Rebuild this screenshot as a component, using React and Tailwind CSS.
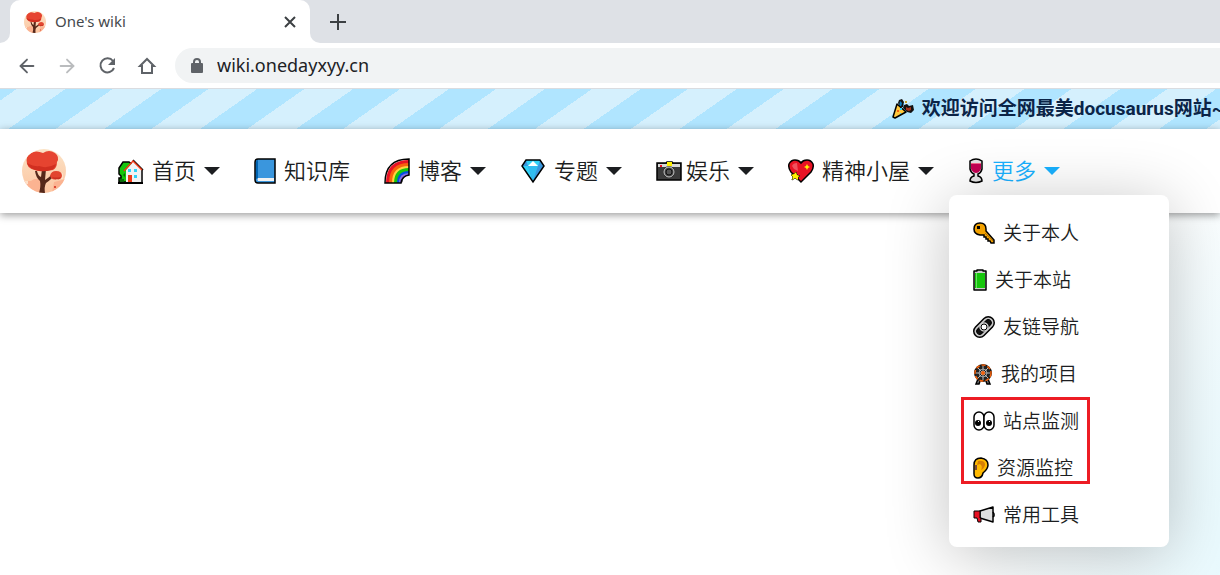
import React from 'react';
import { ArrowLeft, ArrowRight } from 'lucide-react';

const TreeLogo = ({ className }) => (
  <svg viewBox="0 0 44 44" className={className} aria-hidden="true">
    <defs>
      <clipPath id="tree-clip">
        <circle cx="22" cy="22" r="22" />
      </clipPath>
      <linearGradient id="tree-sky" x1="0" y1="0" x2="0" y2="1">
        <stop offset="0" stopColor="#fbe3c6" />
        <stop offset="1" stopColor="#fcc4a0" />
      </linearGradient>
    </defs>
    <g clipPath="url(#tree-clip)">
      <rect width="44" height="44" fill="url(#tree-sky)" />
      <path d="M0 32h9l3-2h7v14H0zM32 33l12-3v14H30z" fill="#fbb391" />
      <path d="M1 32h5v3H1zM33 24h8v6h-8z" fill="#fde0c8" />
      <path d="M17 44q2-7 1-12-4-3-5-10h2q1 5 4 6l1-8h4l-1 11q5-3 7-6l2 1q-2 4-8 8-2 4-1 10z" fill="#55281a" />
      <path d="M5 15q-2-8 4-11 5-3 12 0 6-4 12 0 5 4 2 9 0 6-4 8-6 1-11 1-13 0-15-7z" fill="#e64430" />
      <path d="M5 14q8 4 12 3 8 3 17-2-1 5-5 6-6 2-12 1-10-2-12-8z" fill="#d12f20" />
      <path d="M28 27q1-5 6-5 6 0 6 5-1 4-5 3-5 2-7-3z" fill="#e2452f" />
      <path d="M30 28q4 1 9 0-1 3-4 2-3 1-5-2z" fill="#c93020" />
      <path d="M32 37h2v2h-2z" fill="#dc4a35" />
    </g>
  </svg>
);

const House = () => (
  <svg viewBox="0 0 26 26" className="h-[26px] w-[26px]" aria-hidden="true">
    <path d="M1 24v-4h2v-2l-2-2v-6l4-6h6l4 3v17z" fill="#16c60c" stroke="#000" strokeWidth="1.5" />
    <path d="M2 21h4v3H2zM5 17l2 2v-4z" fill="#0b6a0b" />
    <path d="M8 24V12l7-8 8 8v12z" fill="#f2f2f2" />
    <path d="M24 24V12" stroke="#000" strokeWidth="1.5" />
    <path d="M15 2l10 10" fill="none" stroke="#000" strokeWidth="1.5" />
    <path d="M6 13l9-10 9 9" fill="none" stroke="#f03a17" strokeWidth="1.5" />
    <path d="M10 11h3v3h-3zM16 11h3v3h-3zM16 17h3v3h-3z" fill="#31d2f7" />
    <path d="M10 17h4v7h-4z" fill="#f03a17" />
    <path d="M0 25h25" stroke="#000" strokeWidth="2" />
  </svg>
);

const Book = () => (
  <svg viewBox="0 0 22 26" className="h-[26px] w-[22px]" aria-hidden="true">
    <path d="M1 4q0-3 3-3h17v24H4q-3 0-3-3z" fill="#3a96dd" stroke="#000" strokeWidth="1.5" />
    <path d="M2 4q0-2 2-2v18l-2 1z" fill="#0063b1" />
    <path d="M4 20h16v3H4q-1-1 0-3z" fill="#f2f2f2" />
  </svg>
);

const Rainbow = () => (
  <svg viewBox="0 0 26 26" className="h-[26px] w-[26px]" aria-hidden="true">
    <path d="M2 25Q2 2 25 2v15q-7 1-7 8z" fill="#e81224" />
    <path d="M5 25Q5 5 25 5v12q-7 1-7 8z" fill="#f7630c" />
    <path d="M8 25Q8 8 25 8v9q-7 1-7 8z" fill="#ffd23e" />
    <path d="M10 25q0-15 15-15v7q-7 1-7 8z" fill="#16c60c" />
    <path d="M13 25q0-12 12-12v4q-7 1-7 8z" fill="#0050e0" />
    <path d="M15 25q0-10 10-10v2q-7 1-7 8z" fill="#886ce4" />
    <path d="M1 25Q1 1 25 1v16q-7 1-8 8z" fill="none" stroke="#000" strokeWidth="1.5" />
  </svg>
);

const Diamond = () => (
  <svg viewBox="0 0 26 26" className="h-[26px] w-[26px]" aria-hidden="true">
    <path d="M6 2h14l4 6-11 16L2 8z" fill="#3a96dd" />
    <path d="M6 2h14l-2 6H8z" fill="#31d2f7" />
    <path d="M2 8h6l5 16z" fill="#31d2f7" />
    <path d="M8 8h10l-5 15z" fill="#31bdf0" />
    <path d="M8 8l5-5 5 5z" fill="#fff" />
    <path d="M6 2h14l4 6-11 16L2 8z" fill="none" stroke="#000" strokeWidth="1.5" />
  </svg>
);

const Camera = () => (
  <svg viewBox="0 0 26 26" className="h-[26px] w-[26px]" aria-hidden="true">
    <path d="M1 5h9l1-1h5l1 1h8v17H1z" fill="#3b3b3b" stroke="#000" strokeWidth="1.5" />
    <path d="M2 6h22v3H2z" fill="#d9d9d9" />
    <path d="M4 7h2v2H4z" fill="#e81224" />
    <path d="M11 4h5v4h-5z" fill="#fff100" />
    <circle cx="13" cy="14" r="6" fill="#2a2a2a" />
    <circle cx="13" cy="14" r="5" fill="#444" stroke="#ccc" />
    <circle cx="13" cy="14" r="3" fill="#555" stroke="#111" />
  </svg>
);

const Heart = () => (
  <svg viewBox="0 0 26 26" className="h-[26px] w-[26px]" aria-hidden="true">
    <path d="M13 24L3 14Q0 10 1 6q2-4 6-4 4 0 6 3 2-3 6-3 4 0 6 4 1 4-2 8z" fill="#e81224" stroke="#000" strokeWidth="1.5" />
    <path d="M4 8q1-3 5-3l1 8-4-2z" fill="#f46c76" opacity=".7" />
    <path d="M19 6l1 2 2 1-2 1-1 2-1-2-2-1 2-1z" fill="#fff100" />
    <path d="M8 14l1 3 3 1-2 1v3l-3-2-3 2 1-3-2-2 3-1z" fill="#fff100" stroke="#000" strokeWidth="1" paintOrder="stroke" />
  </svg>
);

const Wine = () => (
  <svg viewBox="0 0 16 26" className="h-[26px] w-4" aria-hidden="true">
    <path d="M2 3q6-4 12 0v8q-1 4-4 5v2q4 1 4 5-6 3-12 0 0-4 4-5v-2q-3-1-4-5z" fill="#e4e4e4" stroke="#000" strokeWidth="1.5" />
    <path d="M3 5h10v6q-2 4-5 4t-5-4z" fill="#c30052" />
    <path d="M3 5h10v1H3z" fill="#f3648a" />
  </svg>
);

const Popper = () => (
  <svg viewBox="0 0 22 22" className="h-[22px] w-[22px]" aria-hidden="true">
    <path d="M6 5l1-3 3-1 2 3-1 5H8zM11 10l1-3 3-1 2 2 4-1 1 5-3 3-4-1z" fill="#111" />
    <path d="M8 3l2 2-1 4H7zM11 5l1 1-1 2z" fill="#0b7fc4" />
    <path d="M14 9l2 1 3-1v3l-2 1-3-1z" fill="#a8321c" />
    <path d="M13 3h2v2h-2z" fill="#c8a22a" />
    <path d="M5 6l9 8-11 6-2-1z" fill="#ffc83d" stroke="#000" strokeWidth="1.5" strokeLinejoin="round" />
    <path d="M8 10h2v2H8zM8 15h1v1H8z" fill="#31d2f7" />
    <path d="M5 12h2v2H5z" fill="#f7630c" />
  </svg>
);

const Key = () => (
  <svg viewBox="0 0 22 22" className="h-[22px] w-[22px]" aria-hidden="true">
    <path d="M7 1q6 0 6 6v2l8 9v3h-3l-1-2h-2v-2h-2v-2h-2v-2H7Q1 12 1 7q0-6 6-6z" fill="#f2a100" stroke="#000" strokeWidth="1.5" />
    <path d="M12 11l8 8" stroke="#b87400" strokeWidth="1" />
    <path d="M4 4h3v3H4z" fill="#000" />
  </svg>
);

const Battery = () => (
  <svg viewBox="0 0 14 22" className="h-[22px] w-[14px]" aria-hidden="true">
    <path d="M1 2h3V1h6v1h3v19H1z" fill="#ccc" stroke="#000" strokeWidth="1.5" strokeLinejoin="round" />
    <path d="M2 4h10v15H2z" fill="#16c60c" />
    <path d="M3 4h1v15H3z" fill="#6be065" />
  </svg>
);

const Link = () => (
  <svg viewBox="0 0 22 22" className="h-[22px] w-[22px]" aria-hidden="true">
    <g transform="rotate(-45 11 11)">
      <rect x="-1" y="5" width="24" height="12" rx="6" fill="#c8c8c8" stroke="#000" strokeWidth="1.5" />
      <rect x="2" y="8" width="18" height="6" rx="3" fill="#111" stroke="#000" strokeWidth="1" />
    </g>
    <circle cx="11" cy="11" r="4" fill="#fff" stroke="#ccc" strokeWidth="1.5" />
    <circle cx="11" cy="11" r="3" fill="#fff" stroke="#000" strokeWidth="1" />
  </svg>
);

const Wheel = () => (
  <svg viewBox="0 0 20 22" className="h-[22px] w-5" aria-hidden="true">
    <path d="M5 16l-2 5h3l1-3M15 16l2 5h-3l-1-3" fill="#777" stroke="#000" strokeWidth="1.5" />
    <circle cx="10" cy="10" r="9" fill="#111" />
    <circle cx="10" cy="10" r="8" fill="#222" stroke="#f7630c" strokeWidth="1.5" strokeDasharray="4 2" />
    <circle cx="10" cy="10" r="4" fill="none" stroke="#999" strokeWidth="1" />
    <path d="M10 3v14M3 10h14M5 5l10 10M15 5L5 15" stroke="#bbb" strokeWidth="1" />
    <circle cx="10" cy="10" r="2" fill="#f7630c" />
  </svg>
);

const Eyes = () => (
  <svg viewBox="0 0 22 22" className="h-[22px] w-[22px]" aria-hidden="true">
    <rect x="1" y="2" width="10" height="18" rx="5" fill="#fff" stroke="#000" strokeWidth="1.5" />
    <rect x="11" y="2" width="10" height="18" rx="5" fill="#fff" stroke="#000" strokeWidth="1.5" />
    <circle cx="5" cy="13" r="3" />
    <circle cx="16" cy="13" r="3" />
    <path d="M5 11h1v1H5zM16 11h1v1h-1z" fill="#fff" />
  </svg>
);

const Ear = () => (
  <svg viewBox="0 0 16 22" className="h-[22px] w-4" aria-hidden="true">
    <path d="M1 8q0-7 7-7 7 1 7 7 0 4-5 8-1 5-5 5-4 0-4-4z" fill="#ffb900" stroke="#000" strokeWidth="1.5" />
    <path d="M5 4q7-1 7 4-1 4-4 5 2-4-1-6l-3 1z" fill="#d67f05" />
    <path d="M2 8h2v5H2z" fill="#7a4a3a" />
  </svg>
);

const Megaphone = () => (
  <svg viewBox="0 0 22 22" className="h-[22px] w-[22px]" aria-hidden="true">
    <path d="M7 7l13-4v15L7 14z" fill="#dedede" stroke="#000" strokeWidth="1.5" strokeLinejoin="round" />
    <path d="M1 7h6v7h1v4H5l-1-4H1z" fill="#e81224" stroke="#000" strokeWidth="1" strokeLinejoin="round" />
    <path d="M20 8l1 2v2l-1 1" fill="none" stroke="#000" strokeWidth="1.5" />
  </svg>
);

const navItems = [
  { icon: <House />, label: '首页', menu: true, gap: 'gap-2' },
  { icon: <Book />, label: '知识库', gap: 'gap-2' },
  { icon: <Rainbow />, label: '博客', menu: true, gap: 'gap-2' },
  { icon: <Diamond />, label: '专题', menu: true, gap: 'gap-2' },
  { icon: <Camera />, label: '娱乐', menu: true, gap: 'gap-1' },
  { icon: <Heart />, label: '精神小屋', menu: true, gap: 'gap-2' },
];

const menuItems = [
  { icon: <Key />, label: '关于本人' },
  { icon: <Battery />, label: '关于本站' },
  { icon: <Link />, label: '友链导航' },
  { icon: <Wheel />, label: '我的项目' },
  { icon: <Eyes />, label: '站点监测' },
  { icon: <Ear />, label: '资源监控' },
  { icon: <Megaphone />, label: '常用工具' },
];

const Caret = () => (
  <svg viewBox="0 0 16 8" className="h-2 w-4" aria-hidden="true">
    <path d="M0 0h16L8 8z" fill="currentColor" />
  </svg>
);

const BrowserChrome = () => (
  <div className="font-['Noto_Sans',sans-serif] font-normal">
    <div className="flex h-[43px] items-end bg-[#dee1e6]">
      <div className="h-[43px] w-[10px] bg-white">
        <div className="h-full rounded-br-[10px] bg-[#dee1e6]" />
      </div>
      <div className="flex h-[43px] w-[300px] items-center rounded-t-[10px] bg-white px-[14px]">
        <TreeLogo className="h-[22px] w-[22px]" />
        <span className="ml-[9px] flex-1 text-[15px] text-[#45494d]">One's wiki</span>
        <button type="button" aria-label="Close tab" className="text-[#3c4043]">
          <svg viewBox="0 0 12 12" className="h-3 w-3" aria-hidden="true">
            <path d="M1 1l10 10M11 1L1 11" stroke="currentColor" strokeWidth="2" />
          </svg>
        </button>
      </div>
      <div className="h-[43px] w-[10px] bg-white">
        <div className="h-full rounded-bl-[10px] bg-[#dee1e6]" />
      </div>
      <button type="button" aria-label="New tab" className="ml-[10px] flex h-[43px] items-center text-[#3c4043]">
        <svg viewBox="0 0 16 16" className="h-4 w-4" aria-hidden="true">
          <path d="M8 0v16M0 8h16" stroke="currentColor" strokeWidth="2" />
        </svg>
      </button>
    </div>
    <div className="flex h-[46px] items-center border-b border-[#dadce0] bg-white pl-4 text-[#5f6368]">
      <button type="button" aria-label="Back">
        <ArrowLeft className="h-[22px] w-[22px]" />
      </button>
      <button type="button" aria-label="Forward" className="ml-[18px] text-[#babcbe]">
        <ArrowRight className="h-[22px] w-[22px]" />
      </button>
      <button type="button" aria-label="Reload" className="ml-[18px]">
        <svg viewBox="0 0 22 22" className="h-[22px] w-[22px]" aria-hidden="true">
          <path d="M18 13a7 7 0 1 1-1-7" fill="none" stroke="currentColor" strokeWidth="2" />
          <path d="M19 3v7h-7z" fill="currentColor" />
        </svg>
      </button>
      <button type="button" aria-label="Home" className="ml-[18px]">
        <svg viewBox="0 0 22 22" className="h-[22px] w-[22px]" aria-hidden="true">
          <path d="M4 11l7-7 7 7h-2v7H6v-7z" fill="none" stroke="currentColor" strokeWidth="2" />
        </svg>
      </button>
      <div className="ml-[17px] flex h-[35px] flex-1 items-center rounded-l-full bg-[#f1f3f4] pl-4">
        <svg viewBox="0 0 12 16" className="h-4 w-3" aria-hidden="true">
          <path d="M3 6V4a3 3 0 0 1 6 0v2" fill="none" stroke="currentColor" strokeWidth="2" />
          <rect y="5" width="12" height="10" rx="1" fill="currentColor" />
        </svg>
        <input
          type="text"
          aria-label="Address"
          defaultValue="wiki.onedayxyy.cn"
          className="ml-[14px] flex-1 bg-transparent text-[18px] text-[#202124] outline-none"
        />
      </div>
    </div>
  </div>
);

const MoreMenu = () => (
  <ul className="absolute left-[-19px] top-full w-[220px] rounded-lg bg-white px-3 pt-[14px] pb-[9px] shadow-[0_8px_64px_rgba(0,0,0,0.24)]">
    {menuItems.map((item) => (
      <li key={item.label}>
        <a href="#" className="flex h-[47px] items-center gap-2 px-3 text-[19px] text-[#1c1e21]">
          {item.icon}
          {item.label}
        </a>
      </li>
    ))}
    <li aria-hidden="true" className="pointer-events-none absolute left-3 top-[202px] h-[87px] w-[129px] border-3 border-[#ed1c24]" />
  </ul>
);

const App = () => {
  return (
    <div className="flex min-h-screen flex-col overflow-hidden bg-white font-['Noto_Sans_CJK_SC',sans-serif] font-[350]">
      <BrowserChrome />
      <div className="flex h-10 items-center justify-end overflow-hidden bg-[repeating-linear-gradient(-35deg,#d5f0fd_0_8px,#b0e5ff_8px_35px,#d5f0fd_35px_55px)]">
        <div className="-mr-1 flex items-center gap-2 whitespace-nowrap font-['Roboto','Noto_Sans_CJK_SC',sans-serif] text-[19px] font-bold text-[#0b2447]">
          <Popper />
          <span>欢迎访问全网最美docusaurus网站~</span>
        </div>
      </div>
      <header className="relative z-10 flex h-[84px] items-center bg-white pl-[22px] shadow-[0_2px_8px_rgba(0,0,0,0.4)]">
        <a href="#" aria-label="Home page">
          <TreeLogo className="h-11 w-11" />
        </a>
        <nav className="ml-[52px] flex items-center gap-[34px] text-[22px] text-[#1c1e21]">
          {navItems.map((item) => (
            <a key={item.label} href="#" className="flex items-center gap-2">
              <span className={`flex items-center ${item.gap}`}>
                {item.icon}
                <span className="pb-1">{item.label}</span>
              </span>
              {item.menu && <Caret />}
            </a>
          ))}
          <div className="relative">
            <a href="#" className="flex h-12 items-center gap-2 text-[#19b1ff]">
              <Wine />
              <span className="pb-1">更多</span>
              <Caret />
            </a>
            <MoreMenu />
          </div>
        </nav>
      </header>
      <main className="flex-1 bg-[radial-gradient(circle_at_120%_100%,#d5f5fd_0,#ffffff_500px)]" />
    </div>
  );
};

export default App;
